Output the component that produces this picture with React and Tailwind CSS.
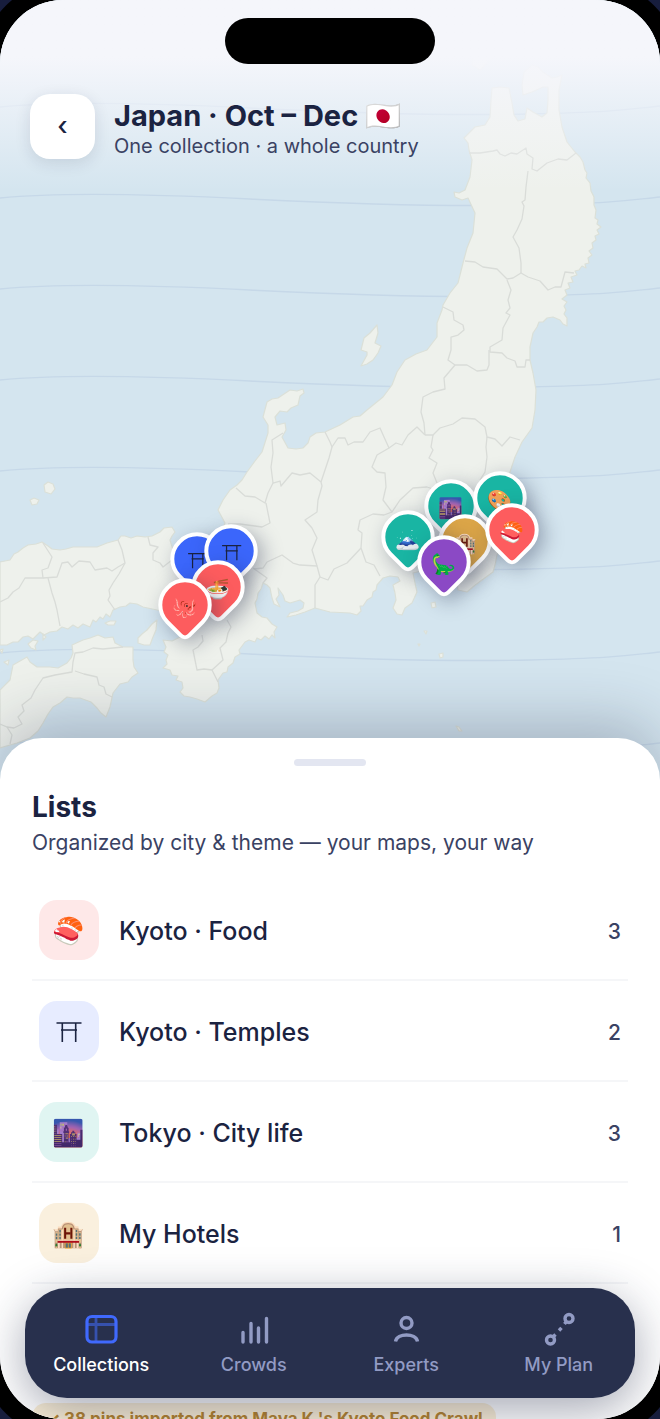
import clsx from "clsx";

const LATITUDES = [107, 198, 289, 380, 471, 562, 653, 744];

const HONSHU =
  "M492 88L500 87L509 88L512 103L514 115L518 121L525 119L527 108L533 112L542 117L547 113L548 100L548 87L543 87L532 92L523 95L522 85L524 72L532 65L538 67L543 72L552 78L557 77L562 75L559 90L559 110L562 127L567 142L575 152L580 157L583 162L585 170L587 173L586 178L590 183L591 191L594 197L594 205L596 210L595 218L598 220L597 224L601 227L597 230L599 234L595 236L596 240L592 243L593 248L589 251L592 255L588 258L589 263L585 264L586 268L582 266L579 270L575 271L577 275L571 277L573 282L568 283L570 288L565 290L567 295L562 299L567 302L564 306L566 310L564 314L567 318L567 326L563 324L560 320L553 317L547 318L543 322L539 322L537 327L533 333L530 347L530 360L533 373L536 390L535 410L532 428L522 442L515 457L510 472L508 490L515 505L524 520L512 528L503 540L497 555L495 565L493 572L482 580L474 586L467 592L458 590L457 582L461 566L457 550L448 547L443 560L436 572L425 570L413 573L415 583L417 592L412 603L405 608L402 615L397 614L393 608L396 600L395 593L393 585L400 581L398 577L390 576L383 578L377 585L376 590L373 592L372 597L367 600L363 606L360 606L361 611L357 615L350 613L330 612L315 608L305 612L296 615L287 617L290 613L298 611L303 608L304 603L300 600L290 603L285 601L283 595L278 588L279 595L276 599L280 607L274 604L272 598L270 588L267 585L263 583L261 589L258 593L257 599L255 603L257 613L262 617L267 618L272 624L277 627L274 632L275 638L272 635L269 639L265 636L261 640L257 638L255 642L249 640L245 642L239 650L240 654L235 657L233 663L228 667L227 672L223 673L218 680L219 688L217 693L212 696L205 702L197 699L190 697L184 696L180 692L183 688L182 682L176 680L178 676L172 675L170 670L163 668L167 664L166 660L168 655L164 652L166 647L163 640L172 641L182 636L181 627L179 615L168 612L157 610L143 607L137 604L130 603L126 606L120 607L113 610L110 617L106 614L103 619L100 617L96 622L93 620L90 627L83 624L78 628L73 625L68 629L62 627L57 631L50 632L44 635L40 632L37 635L33 639L28 636L23 637L18 642L13 642L7 645L0 645L0 562L10 560L14 554L18 552L23 548L28 545L36 544L42 542L48 546L52 549L60 550L66 549L73 547L84 547L97 547L107 543L118 540L121 536L125 536L131 538L137 536L145 537L152 536L160 532L164 528L172 527L175 532L172 536L170 540L173 550L180 552L190 550L200 545L212 536L222 530L225 523L218 510L223 500L230 490L237 485L242 480L247 472L255 461L262 452L268 433L268 425L263 417L267 402L272 399L278 398L284 394L290 390L297 391L303 389L304 393L300 396L298 405L291 408L287 412L280 411L275 417L277 425L285 423L286 430L282 437L288 448L296 449L303 448L308 443L310 437L316 433L325 432L340 425L353 417L360 416L367 410L383 397L392 385L397 372L405 360L416 354L427 350L437 337L437 323L442 310L443 305L450 293L458 283L463 263L467 248L473 233L475 213L468 198L462 200L455 197L454 192L459 193L465 190L470 177L472 160L469 150L468 143L464 138L475 127L485 125L490 117L491 100Z";

const SHIKOKU =
  "M0 690L10 680L13 665L20 661L27 657L30 662L37 667L50 667L58 668L67 663L71 658L73 653L72 645L83 640L90 638L98 635L105 638L113 637L115 643L123 647L133 647L133 660L134 667L138 673L132 677L128 682L120 684L113 693L110 707L106 717L101 713L97 708L91 702L80 698L73 698L67 697L60 703L53 707L48 714L43 723L38 731L30 738L17 743L0 748Z";

const ISLANDS = [
  // Awaji and Shodoshima
  "M157 620L156 630L153 637L150 645L144 645L138 643L138 638L142 634L147 630L152 624Z",
  "M105 623L110 621L116 621L114 625L108 625Z",
  // Sado
  "M377 325L378 333L375 343L381 346L378 353L373 360L367 364L361 366L367 355L367 352L361 350L364 338L370 333Z",
  // Oki
  "M44 485L48 482L53 484L55 489L51 494L45 492Z",
  "M30 500L34 498L39 500L37 504L32 505Z",
  // Izu islands
  "M431 603L435 602L436 607L432 608Z",
  "M439 654L443 653L443 657L440 658Z",
  "M456 726L459 727L462 731L459 731Z",
  "M424 631L427 631L426 634Z",
  "M418 644L420 644L419 646Z",
  // Seto inland sea
  "M28 644L33 640L38 641L35 646L36 650L31 648Z",
  "M0 650L3 649L2 653Z",
  "M4 662L9 660L8 665Z",
  "M43 634L46 637L43 640Z",
  // southern tip of Hokkaido
  "M480 0L476 30L472 65L480 70L492 58L512 38L530 44L545 34L536 20L560 0Z",
];

const PREFECTURES = [
  "M469 153L480 153L493 151L497 150L500 154L505 156L511 153L517 154L526 148L527 154L533 158L532 169L537 171L547 163L558 159L567 160L576 153",
  "M528 171L526 187L525 200L522 202L524 206L522 219L517 230L513 237L519 248L521 263L521 273",
  "M465 261L475 262L483 267L497 269L507 279L513 278L521 273L528 277L540 281L548 290L555 287L561 287L565 272L574 273",
  "M507 280L511 290L508 300L510 308L506 313L510 315L503 328L502 340L490 347L490 352L502 353L507 358L515 361L517 367L525 367L526 360L530 360",
  "M443 307L453 312L454 320L463 325L464 330L458 335L451 337L451 350L448 360L455 365L467 365L477 371L487 370L489 365L489 350",
  "M455 365L444 378L445 389L433 392L423 397L421 412L424 423L425 435",
  "M425 435L433 435L440 428L453 424L462 418L475 419L485 427L487 437L495 439L502 446L510 437L520 440",
  "M487 437L486 447L487 457L485 472L480 480",
  "M433 435L431 447L433 450L429 458L437 463L433 473L437 483",
  "M325 432L330 442L332 447L338 438L345 438L348 445L354 442L363 442L370 432L380 428L384 437L389 448L396 443L402 445L408 435L417 427L425 435",
  "M332 447L329 458L324 473L321 482",
  "M283 433L272 440L273 453L271 467L273 483L280 481L281 486L292 473L300 475L310 473L321 482",
  "M236 488L245 496L255 497L265 503L268 493L273 483M266 503L268 513L270 523L262 527L255 526L240 524L228 524",
  "M321 482L322 486L318 500L317 512L305 520L312 528L317 538L312 550L317 566",
  "M254 569L263 568L267 562L282 555L293 563L300 565L317 566L320 577L315 585L315 608",
  "M389 448L377 455L372 467L377 472L385 473L386 487L383 500L392 512L400 500L413 488L427 487L436 490",
  "M392 512L384 515L373 514L360 520L358 530L362 533L361 548L366 562L374 565L380 576",
  "M361 548L347 563L334 569L328 580L320 577",
  "M43 543L52 557L48 568L42 570L43 578L25 578L19 588L13 592L8 598L0 602",
  "M48 578L52 593L55 602L57 610L60 626",
  "M43 578L57 577L62 563L68 562L72 567L79 561L90 562L95 570L107 568L112 571L118 567L125 563",
  "M118 540L122 550L125 563L119 574L113 583L109 590L110 596L108 600L115 610",
  "M148 537L150 545L158 547L153 553L153 560L160 563L163 567L172 560",
  "M202 635L203 641L198 647L193 650L197 670L204 669L212 670L218 682",
  "M227 620L231 627L228 633L226 642L220 648L223 660L212 670",
  "M253 568L260 573L267 578L263 583",
  "M123 647L103 649L93 648L83 652L75 653L73 662L72 672L55 675L43 678L35 690L31 698L22 705L24 711L18 717L22 724L14 728L7 727L0 724",
  "M75 671L84 674L97 677L99 685L104 687L106 694L112 697",
  "M7 727L12 735L10 744",
];

function JapanMap() {
  return (
    <svg
      viewBox="0 0 660 790"
      preserveAspectRatio="xMidYMin slice"
      className="absolute inset-0 h-full w-full"
      aria-hidden="true"
    >
      <g fill="none" stroke="#c6d8e8" strokeWidth="1.4">
        {LATITUDES.map((y) => (
          <path
            key={y}
            d={`M0 ${y}C60 ${y - 6} 150 ${y - 4} 250 ${y + 1}S440 ${y + 9} 530 ${y + 7}S630 ${y + 2} 660 ${y - 1}`}
          />
        ))}
      </g>
      <g fill="#eef1ec" stroke="#dbe0d8" strokeWidth="1.2" strokeLinejoin="round">
        <path d={HONSHU} />
        <path d={SHIKOKU} />
        {ISLANDS.map((d) => (
          <path key={d} d={d} />
        ))}
      </g>
      <g fill="none" stroke="#d9dcd8" strokeWidth="1.3" strokeLinejoin="round">
        {PREFECTURES.map((d) => (
          <path key={d} d={d} />
        ))}
      </g>
    </svg>
  );
}

function Torii({ className }) {
  return (
    <svg
      viewBox="0 0 26 22"
      fill="none"
      stroke="#1b2341"
      strokeWidth="1.6"
      className={className}
      aria-hidden="true"
    >
      <path d="M0.5 2H25.5M5 9H21M6.3 2V21M19.7 2V21" />
    </svg>
  );
}

const PINS = [
  { id: "fushimi", icon: "torii", color: "bg-[#3b66fb]", place: "left-[29.8%] top-[559px]" },
  { id: "kinkaku", icon: "torii", color: "bg-[#3b66fb]", place: "left-[35%] top-[551px]" },
  { id: "ramen", icon: "🍜", color: "bg-[#fd5c5e]", place: "left-[33.1%] top-[587px]" },
  { id: "takoyaki", icon: "🐙", color: "bg-[#fd5c5e]", place: "left-[28%] top-[605px]" },
  { id: "city", icon: "🌆", color: "bg-[#19b5a3]", place: "left-[68.3%] top-[506px]" },
  { id: "art", icon: "🎨", color: "bg-[#19b5a3]", place: "left-[75.8%] top-[498px]" },
  { id: "hotel", icon: "🏨", color: "bg-[#dba548]", place: "left-[70.4%] top-[541px]" },
  { id: "sushi", icon: "🍣", color: "bg-[#fd5c5e]", place: "left-[77.5%] top-[530px]" },
  { id: "fuji", icon: "🗻", color: "bg-[#19b5a3]", place: "left-[61.8%] top-[537px]" },
  { id: "dino", icon: "🦕", color: "bg-[#8b49c5]", place: "left-[67.2%] top-[562px]" },
];

function Pin({ icon, color, place }) {
  return (
    <div className={clsx("absolute -translate-x-1/2 -translate-y-1/2", place)}>
      <div
        className={clsx(
          "flex h-[53px] w-[53px] -rotate-45 items-center justify-center rounded-[26px] rounded-bl-[8px] border-4 border-white shadow-[0_8px_20px_rgba(27,35,65,0.35)]",
          color
        )}
      >
        <span className="rotate-45 pt-[3px] text-[20px] leading-none">
          {icon === "torii" ? <Torii className="h-[17px] w-[20px]" /> : icon}
        </span>
      </div>
    </div>
  );
}

const LISTS = [
  { name: "Kyoto · Food", icon: "🍣", tint: "bg-[#fee8e8]", count: 3 },
  { name: "Kyoto · Temples", icon: "torii", tint: "bg-[#e7ecff]", count: 2 },
  { name: "Tokyo · City life", icon: "🌆", tint: "bg-[#e0f5f2]", count: 3 },
  { name: "My Hotels", icon: "🏨", tint: "bg-[#faf0de]", count: 1 },
];

function ListRow({ name, icon, tint, count }) {
  return (
    <li className="border-b-2 border-[#f5f6f8]">
      <a href="#list" className="flex h-[99px] items-center gap-5 px-[7px]">
        <span
          className={clsx(
            "flex h-[60px] w-[60px] items-center justify-center rounded-[18px] pt-[2px] text-[26px] leading-none",
            tint
          )}
        >
          {icon === "torii" ? <Torii className="h-[22px] w-[26px]" /> : icon}
        </span>
        <span className="flex-1 pt-1 text-[25px] font-medium">{name}</span>
        <span className="pt-1 text-[21px] font-medium text-[#3a4263]">{count}</span>
      </a>
    </li>
  );
}

const TABS = [
  {
    name: "Collections",
    active: true,
    icon: (
      <>
        <path d="M13 6V31M4 13.5H32" stroke="#3651ae" strokeWidth="2.8" />
        <rect x="4" y="5.5" width="29" height="25.5" rx="5" stroke="#4069fd" strokeWidth="3.2" />
      </>
    ),
  },
  {
    name: "Crowds",
    icon: <path d="M7 31V21.5M15 31V12.5M22.5 31V17M30.5 31V7.5" strokeLinecap="round" />,
  },
  {
    name: "Experts",
    icon: (
      <>
        <circle cx="18.5" cy="12" r="5.5" />
        <path d="M7.5 30.5C9 21.8 28 21.8 29.5 30.5" />
      </>
    ),
  },
  {
    name: "My Plan",
    icon: (
      <>
        <circle cx="9.5" cy="29" r="4" />
        <circle cx="28" cy="7.5" r="4" />
        <path d="M12 26L14.5 23.5M18 19.5L20.5 16.8M23.5 13L25 11" />
      </>
    ),
  },
];

function TabBar() {
  return (
    <nav className="absolute inset-x-[25px] bottom-[21px] grid h-[110px] grid-cols-4 rounded-[42px] bg-[#28304d] shadow-[0_12px_48px_rgba(27,35,65,0.4)]">
      {TABS.map((tab) => (
        <button
          key={tab.name}
          type="button"
          className={clsx(
            "flex flex-col items-center justify-center gap-1.5 pt-0.5 text-[18px] leading-6 font-medium",
            tab.active ? "text-white" : "text-[#929bc4]"
          )}
        >
          <svg
            viewBox="0 0 36 36"
            fill="none"
            stroke="currentColor"
            strokeWidth="3.4"
            className="h-9 w-9"
            aria-hidden="true"
          >
            {tab.icon}
          </svg>
          {tab.name}
        </button>
      ))}
    </nav>
  );
}

export default function App() {
  return (
    <div className="h-screen overflow-hidden bg-[#171d3d] font-['Inter','Noto_Color_Emoji',sans-serif] text-[#1b2341]">
      <main className="relative flex h-full flex-col overflow-hidden rounded-[63px] bg-white ring-[18px] ring-black">
        <section className="relative h-[790px] shrink-0 bg-[#d4e5ef]">
          <JapanMap />
          {PINS.map((pin) => (
            <Pin key={pin.id} {...pin} />
          ))}
          <header className="relative bg-linear-to-b from-[#f5f6fb] from-30% to-[#f5f6fb]/0 px-[30px] pt-[18px] pb-8">
            <div className="mx-auto h-[46px] w-[210px] rounded-full bg-black" />
            <div className="mt-[30px] flex items-center gap-[19px]">
              <button
                type="button"
                aria-label="Back"
                className="h-[65px] w-[65px] rounded-[20px] bg-white pb-0.5 text-[26px] font-medium shadow-[0_4px_16px_rgba(27,35,65,0.12)]"
              >
                ‹
              </button>
              <div className="pt-[3px]">
                <h1 className="text-[29px] leading-[36px] font-bold">
                  Japan · Oct – Dec 🇯🇵
                </h1>
                <p className="text-[20px] leading-[24px] text-[#3a4263]">
                  One collection · a whole country
                </p>
              </div>
            </div>
          </header>
        </section>

        <section className="relative -mt-[52px] shrink-0 rounded-t-[42px] bg-white px-8 pt-[21px] shadow-[0_-16px_60px_rgba(27,35,65,0.25)]">
          <div className="mx-auto h-[7px] w-[72px] rounded-full bg-[#e3e6f1]" />
          <h2 className="mt-[23px] text-[28px] leading-[36px] font-bold">Lists</h2>
          <p className="text-[21px] leading-[36px] text-[#3a4263]">
            Organized by city &amp; theme — your maps, your way
          </p>
          <ul className="mt-[19px]">
            {LISTS.map((list) => (
              <ListRow key={list.name} {...list} />
            ))}
          </ul>
          <p className="mt-[119px] w-fit rounded-t-[14px] bg-[#fbefd6] px-[13px] py-1 text-[17px] leading-6 font-bold text-[#b5842f]">
            ✓ 38 pins imported from Maya K.'s Kyoto Food Crawl
          </p>
        </section>

        <TabBar />
      </main>
    </div>
  );
}
